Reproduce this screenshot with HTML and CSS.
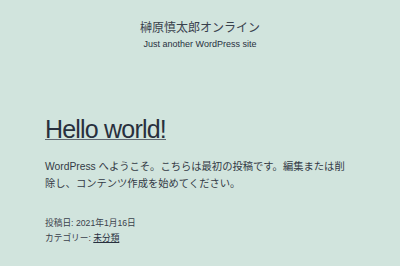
FILE: index.html
```html
<!DOCTYPE html>
<html lang="ja">
<head>
<meta charset="utf-8">
<title>榊原慎太郎オンライン</title>
<link rel="stylesheet" href="styles.css">
</head>
<body>
<header class="site-header">
  <p class="site-title">榊原慎太郎オンライン</p>
  <p class="site-description">Just another WordPress site</p>
</header>
<main class="site-main">
  <article class="post">
    <h1 class="entry-title"><a href="#">Hello world!</a></h1>
    <div class="entry-content">
      <p>WordPress へようこそ。こちらは最初の投稿です。編集または削除し、コンテンツ作成を始めてください。</p>
    </div>
    <footer class="entry-footer">
      <div class="posted-on">投稿日: 2021年1月16日</div>
      <div class="cat-links">カテゴリー: <a href="#">未分類</a></div>
    </footer>
  </article>
</main>
</body>
</html>
```

FILE: styles.css
```css
html, body {
  margin: 0;
  padding: 0;
}
body {
  background: #d1e4dd;
  color: #28303d;
  font-family: "Liberation Sans", "Noto Sans CJK JP", sans-serif;
  width: 400px;
  height: 266px;
  overflow: hidden;
}
.site-header {
  display: flex;
  flex-direction: column;
  align-items: center;
  gap: 2px;
  padding-top: 20px;
}
.site-title {
  margin: 0;
  font-size: 12px;
  line-height: 16px;
  color: #39414c;
}
.site-description {
  margin: 0;
  font-size: 9px;
  line-height: 12px;
}
.site-main {
  padding: 0 45px;
}
.entry-title {
  margin: 64px 0 0;
  font-size: 25px;
  line-height: 30px;
  font-weight: normal;
  letter-spacing: -0.8px;
}
.entry-title a {
  color: #28303d;
  text-decoration: underline;
  text-decoration-thickness: 1px;
  text-decoration-color: #5f6770;
}
.entry-content {
  max-width: 305px;
}
.entry-content p {
  margin: 15px 0 0;
  font-size: 10.3px;
  line-height: 16.5px;
  color: #333a45;
}
.entry-footer {
  margin-top: 23.5px;
  font-size: 8.7px;
  line-height: 15px;
  color: #3a414c;
}
.entry-footer a {
  color: #28303d;
  text-decoration: underline;
  text-decoration-thickness: 1px;
}
```
